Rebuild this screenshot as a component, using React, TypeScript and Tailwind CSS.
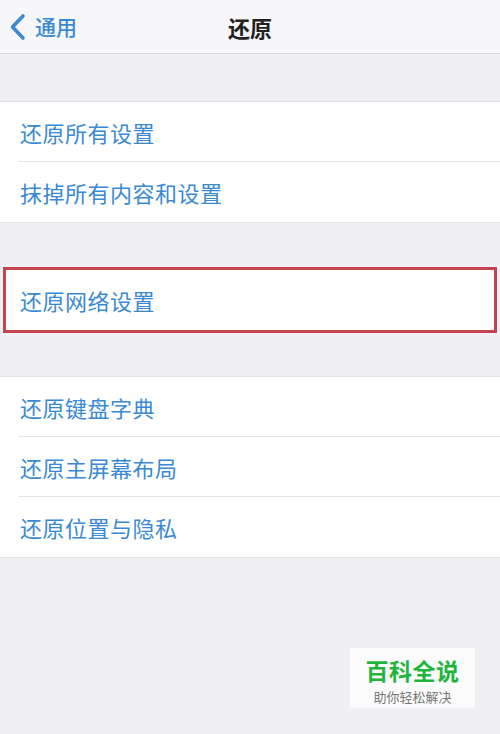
import React from 'react';

const font = { fontFamily: '"Noto Sans CJK SC", "Noto Sans", sans-serif' };

function Row({ label, divider }: { label: string; divider?: boolean }) {
  return (
    <div className="relative h-[60px] flex items-center pl-5 bg-white">
      <span className="text-[22px] text-[#3a89d4] leading-none tracking-[0.5px]">{label}</span>
      {divider && <div className="absolute bottom-0 left-[18px] right-0 h-px bg-[#e3e3e7]" />}
    </div>
  );
}

export default function App() {
  return (
    <div className="w-[500px] h-[734px] bg-[#efeff4] flex flex-col" style={font}>
      {/* Nav bar */}
      <div className="h-[54px] bg-[#f7f7f9] border-b border-[#d9d9de] grid grid-cols-[1fr_auto_1fr] items-center">
        <div className="flex items-center pl-[8px] gap-[9px]">
          <svg width="18" height="28" viewBox="0 0 18 28" fill="none">
            <path d="M15 3 L4.5 14 L15 25" stroke="#3a89d4" strokeWidth="3.6" strokeLinecap="round" strokeLinejoin="round" />
          </svg>
          <span className="text-[21px] font-medium text-[#3a89d4] leading-none">通用</span>
        </div>
        <div className="text-[22px] font-bold text-[#222] leading-none">还原</div>
        <div />
      </div>

      {/* Group 1 */}
      <div className="mt-[47px] border-y border-[#e3e3e7]">
        <Row label="还原所有设置" divider />
        <Row label="抹掉所有内容和设置" />
      </div>

      {/* Highlighted row */}
      <div className="mt-[44px] mx-[3px] border-[3px] border-[#c4434e] h-[66px] bg-white flex items-center pl-[14px]">
        <span className="text-[22px] text-[#3a89d4] leading-none tracking-[0.5px]">还原网络设置</span>
      </div>

      {/* Group 3 */}
      <div className="mt-[43px] border-y border-[#e3e3e7]">
        <Row label="还原键盘字典" divider />
        <Row label="还原主屏幕布局" divider />
        <Row label="还原位置与隐私" />
      </div>

      {/* Watermark */}
      <div className="mt-[90px] flex justify-end pr-[25px]">
        <div className="w-[125px] h-[60px] bg-[#fbfbfb] flex flex-col items-center pt-[6px]">
          <span className="text-[23px] font-bold text-[#1fb53c] leading-[33px] tracking-[0.5px]">百科全说</span>
          <span className="text-[13px] text-[#777] leading-[19px]">助你轻松解决</span>
        </div>
      </div>
    </div>
  );
}
